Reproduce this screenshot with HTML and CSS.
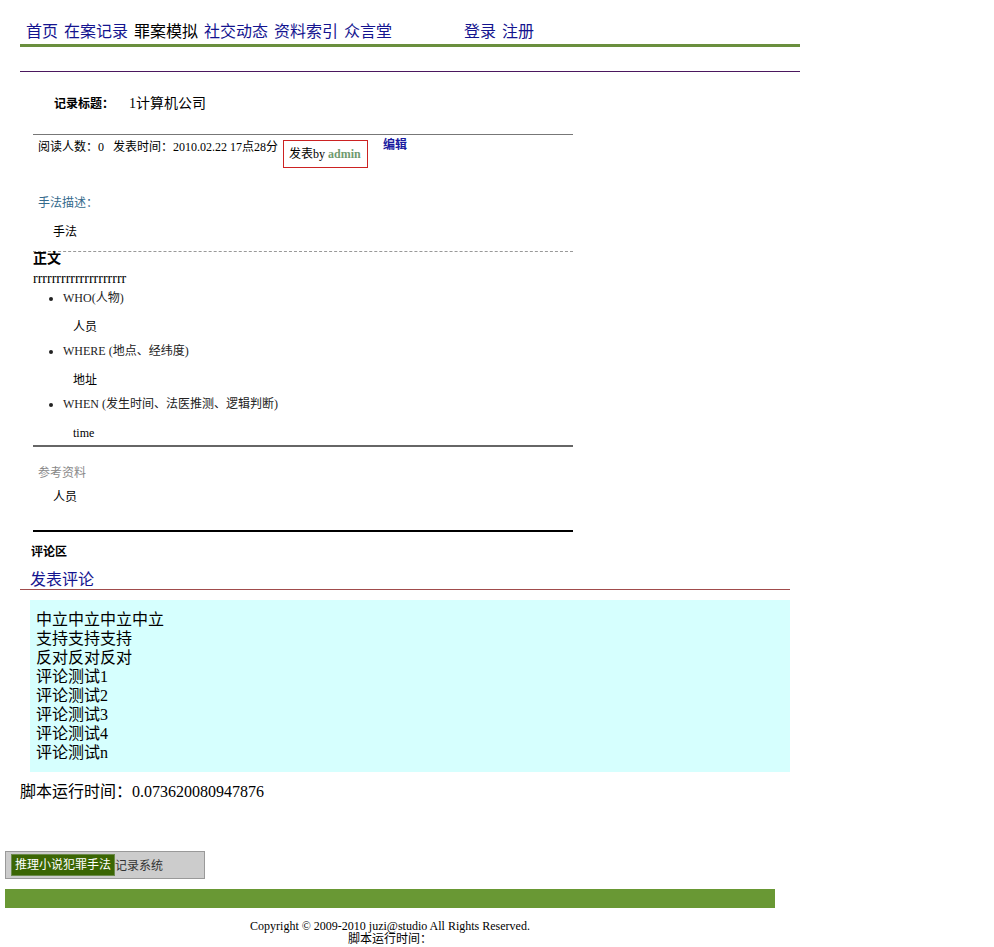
FILE: index.html
```html
<!DOCTYPE html>
<html lang="zh-CN">

<head>
    <meta charset="UTF-8">
    <title>推理小说犯罪手法记录系统</title>
    <link rel="stylesheet" href="styles.css">
</head>

<body>
    <div class="head">
        <div class="nav">
            <a href="#">首页</a>
            <a href="#">在案记录</a>
            <span class="cur">罪案模拟</span>
            <a href="#">社交动态</a>
            <a href="#">资料索引</a>
            <a href="#">众言堂</a>
            <a href="#" class="login">登录</a>
            <a href="#">注册</a>
        </div>
        <div class="subline"></div>
    </div>

    <div class="record">
        <div class="titleRow">
            <b class="lbl">记录标题：</b>
            <span class="ttl">1计算机公司</span>
        </div>

        <div class="meta">
            <span class="info">阅读人数：0&nbsp;&nbsp; 发表时间：2010.02.22 17点28分</span>
            <span class="author">发表by <b>admin</b></span>
            <a href="#" class="edit">编辑</a>
        </div>

        <div class="desc">
            <p class="descTitle">手法描述：</p>
            <p class="descText">手法</p>
        </div>

        <div class="body">
            <h4>正文</h4>
            <p class="rr">rrrrrrrrrrrrrrrrrrrr</p>
            <ul>
                <li>WHO(人物)</li>
                <p class="sub">人员</p>
                <li>WHERE (地点、经纬度)</li>
                <p class="sub">地址</p>
                <li>WHEN (发生时间、法医推测、逻辑判断)</li>
                <p class="sub">time</p>
            </ul>
        </div>

        <div class="refs">
            <p class="refTitle">参考资料</p>
            <p class="refText">人员</p>
        </div>
    </div>

    <div class="comments">
        <b class="cTitle">评论区</b>
        <div class="post"><a href="#">发表评论</a></div>
        <div class="cList">
            中立中立中立中立<br>
            支持支持支持<br>
            反对反对反对<br>
            评论测试1<br>
            评论测试2<br>
            评论测试3<br>
            评论测试4<br>
            评论测试n
        </div>
    </div>

    <p class="runtime">脚本运行时间：0.073620080947876</p>

    <div class="foot">
        <div class="brand"><span class="tag">推理小说犯罪手法</span>记录系统</div>
        <div class="bar"></div>
        <p class="copy">Copyright © 2009-2010 juzi@studio All Rights Reserved.<br>脚本运行时间：</p>
    </div>
</body>

</html>
```

FILE: styles.css
```css
body {
    margin: 0;
    font-family: "Liberation Serif", "Noto Sans CJK SC", serif;
    color: #000;
}

p {
    margin: 0;
}

a {
    text-decoration: none;
}

/* 顶部导航 */
.head {
    width: 780px;
    margin-left: 20px;
}

.nav {
    display: flex;
    gap: 6px;
    padding: 22px 0 3px 6px;
    font-size: 16px;
    line-height: 19px;
    border-bottom: 3px solid #6a8f3e;
}

.nav a {
    color: #14148f;
}

.nav .cur {
    color: #000;
}

.nav .login {
    margin-left: 66px;
}

.subline {
    margin-top: 24px;
    border-top: 1px solid #4b175f;
}

/* 记录 */
.record {
    width: 540px;
    margin-left: 33px;
}

.titleRow {
    margin-top: 22px;
    height: 20px;
    line-height: 20px;
    padding-left: 21px;
    display: flex;
    align-items: center;
}

.lbl {
    font-size: 12px;
    width: 75px;
}

.ttl {
    font-size: 14px;
}

.meta {
    margin-top: 20px;
    border-top: 1px solid #777;
    padding: 5px 0 0 5px;
    display: flex;
    align-items: flex-start;
    font-size: 12px;
    line-height: 14px;
}

.author {
    margin-left: 5px;
    border: 1px solid #cc2222;
    padding: 6px 5px 6px 5px;
    line-height: 14px;
    width: 73px;
}

.author b {
    color: #6f9a6f;
}

.edit {
    margin: -2px 0 0 15px;
    color: #1a1aa0;
    font-weight: bold;
}

.desc {
    padding-top: 28px;
    font-size: 12px;
    line-height: 14px;
    border-bottom: 1px dashed #999;
    padding-bottom: 12px;
}

.descTitle {
    color: #346a8c;
    padding-left: 5px;
}

.descText {
    margin-top: 15px;
    padding-left: 20px;
}

.body h4 {
    margin: 0;
    font-size: 14px;
    line-height: 14px;
}

.rr {
    margin-top: 6px;
    font-size: 14px;
    line-height: 14px;
}

.body ul {
    margin: 5px 0 0 0;
    padding-left: 30px;
    font-size: 12px;
    line-height: 14px;
    color: #222;
}

.sub {
    margin: 15px 0 10px 10px;
    color: #000;
}

.body ul .sub:last-child {
    margin-bottom: 5px;
}

.refs {
    border-top: 2px solid #666;
    border-bottom: 2px solid #000;
    padding: 19px 0 26px 0;
    font-size: 12px;
    line-height: 14px;
}

.refTitle {
    color: #888;
    padding-left: 5px;
}

.refText {
    margin-top: 10px;
    padding-left: 20px;
}

/* 评论区 */
.comments {
    margin-left: 20px;
    width: 770px;
}

.cTitle {
    display: block;
    margin: 13px 0 0 11px;
    font-size: 12px;
    line-height: 14px;
}

.post {
    margin-top: 11px;
    padding-left: 10px;
    font-size: 16px;
    line-height: 19px;
    border-bottom: 1px solid #a04c4c;
}

.post a {
    color: #14148f;
}

.cList {
    margin: 10px 0 0 10px;
    background: #d6fffe;
    padding: 10px 6px 10px;
    font-size: 16px;
    line-height: 19px;
    height: 152px;
}

.runtime {
    margin: 10px 0 0 20px;
    font-size: 16px;
    line-height: 19px;
}

/* 页脚 */
.foot {
    margin: 50px 0 0 5px;
}

.brand {
    width: 198px;
    height: 26px;
    border: 1px solid #999;
    background: #ccc;
    display: flex;
    align-items: center;
    font-size: 12px;
    color: #333;
}

.tag {
    margin-left: 5px;
    background: #3b6604;
    color: #fff;
    border: 1px solid #6b8a4b;
    padding: 3px 3px;
    line-height: 14px;
}

.bar {
    margin-top: 10px;
    width: 770px;
    height: 19px;
    background: #699834;
}

.copy {
    width: 770px;
    margin-top: 12px;
    text-align: center;
    font-size: 12px;
    line-height: 13px;
}
```
